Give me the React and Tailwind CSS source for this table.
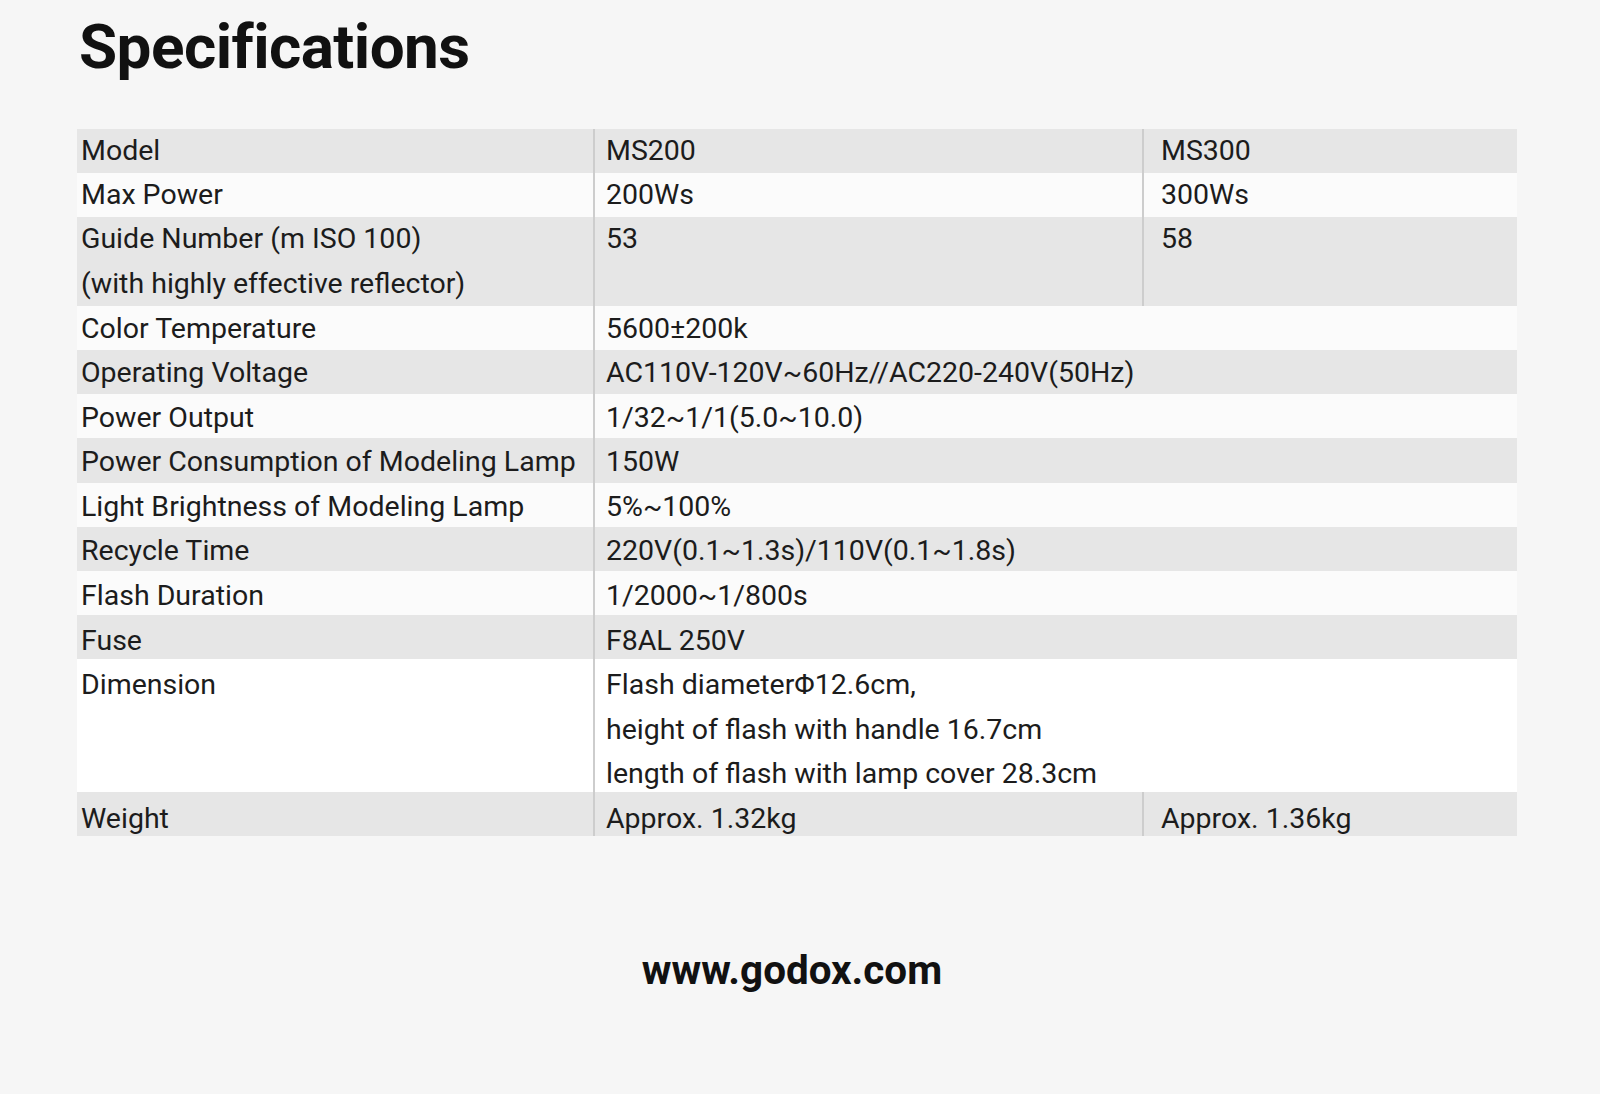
const rows = [
  { label: ['Model'], values: [['MS200'], ['MS300']], shade: true, nudge: 'translate-y-0' },
  { label: ['Max Power'], values: [['200Ws'], ['300Ws']], nudge: 'translate-y-0' },
  { label: ['Guide Number (m ISO 100)', '(with highly effective reflector)'], values: [['53'], ['58']], shade: true, nudge: 'translate-y-0' },
  { label: ['Color Temperature'], values: [['5600±200k']], nudge: 'translate-y-[1px]' },
  { label: ['Operating Voltage'], values: [['AC110V-120V~60Hz//AC220-240V(50Hz)']], shade: true, nudge: 'translate-y-[1px]' },
  { label: ['Power Output'], values: [['1/32~1/1(5.0~10.0)']], nudge: 'translate-y-[2px]' },
  { label: ['Power Consumption of Modeling Lamp'], values: [['150W']], shade: true, nudge: 'translate-y-[2px]' },
  { label: ['Light Brightness of Modeling Lamp'], values: [['5%~100%']], nudge: 'translate-y-[2px]' },
  { label: ['Recycle Time'], values: [['220V(0.1~1.3s)/110V(0.1~1.8s)']], shade: true, nudge: 'translate-y-[2px]' },
  { label: ['Flash Duration'], values: [['1/2000~1/800s']], nudge: 'translate-y-[3px]' },
  { label: ['Fuse'], values: [['F8AL 250V']], shade: true, nudge: 'translate-y-[4px]' },
  {
    label: ['Dimension'],
    values: [['Flash diameterΦ12.6cm,', 'height of flash with handle 16.7cm', 'length of flash with lamp cover 28.3cm']],
    white: true,
    nudge: 'translate-y-[4px]',
  },
  { label: ['Weight'], values: [['Approx. 1.32kg'], ['Approx. 1.36kg']], shade: true, nudge: 'translate-y-[5px]' },
]

function Lines({ lines, nudge }) {
  return (
    <div className={nudge}>
      {lines.map((l, i) => (
        <div key={i}>{l}</div>
      ))}
    </div>
  )
}

function SpecRow({ row }) {
  const bg = row.shade ? 'bg-[#e6e6e6]' : row.white ? 'bg-white' : 'bg-[#fbfbfb]'
  const split = row.values.length > 1
  return (
    <div className={`flex ${bg}`}>
      <div className="w-[516px] shrink-0 pl-[4px]">
        <Lines lines={row.label} nudge={row.nudge} />
      </div>
      {split ? (
        <>
          <div className="w-[549px] shrink-0 border-l-2 border-[#cdcdcd] pl-[11px]">
            <Lines lines={row.values[0]} nudge={row.nudge} />
          </div>
          <div className="flex-1 border-l-2 border-[#cdcdcd] pl-[17px]">
            <Lines lines={row.values[1]} nudge={row.nudge} />
          </div>
        </>
      ) : (
        <div className="flex-1 border-l-2 border-[#cdcdcd] pl-[11px]">
          <Lines lines={row.values[0]} nudge={row.nudge} />
        </div>
      )}
    </div>
  )
}

export default function App() {
  return (
    <div className="min-h-screen bg-[#f6f6f6] font-['Roboto',sans-serif]">
      <div className="ml-[77px] w-[1440px] pt-[16px]">
        <h1 className="pl-[2px] text-[62px] font-bold leading-none tracking-[-0.55px] text-[#111]">Specifications</h1>

        <div className="mt-[51px] text-[28.5px] leading-[44.2px] text-[#1c1c1c]">
          {rows.map((r, i) => (
            <SpecRow key={i} row={r} />
          ))}
        </div>

        <p className="mt-[115px] pr-[10px] text-center text-[40.4px] font-bold leading-none text-[#111]">www.godox.com</p>
      </div>
    </div>
  )
}
